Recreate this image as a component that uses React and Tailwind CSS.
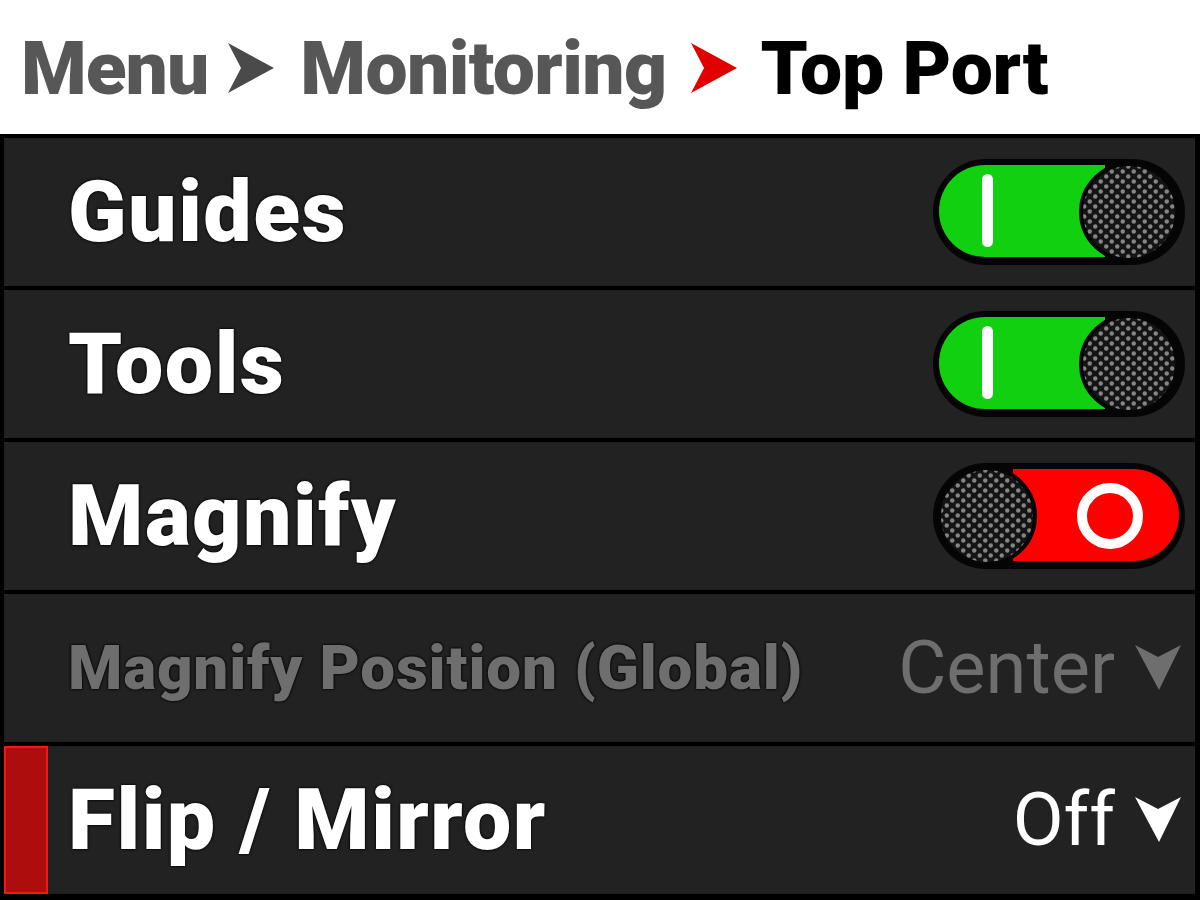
import React from 'react';

const font = { fontFamily: 'Roboto, "Liberation Sans", sans-serif' };

const Chevron = ({ color }) => (
  <svg width="46" height="50" viewBox="0 0 46 50" className="shrink-0">
    <path d="M0 0 L46 25 L0 50 L13 25 Z" fill={color} />
  </svg>
);

const DownArrow = ({ color }) => (
  <svg width="46" height="46" viewBox="0 0 46 46" className="shrink-0">
    <path d="M0 0 L23 12 L46 0 L24 45 Z" fill={color} />
  </svg>
);

const Dots = ({ id }) => (
  <defs>
    <pattern id={id} width="11" height="10" patternUnits="userSpaceOnUse">
      <rect width="11" height="10" fill="#141414" />
      <circle cx="2.75" cy="2.5" r="2.2" fill="#858585" />
      <circle cx="8.25" cy="7.5" r="2.2" fill="#858585" />
    </pattern>
  </defs>
);

const Toggle = ({ on, id }) => (
  <svg width="252" height="106" viewBox="0 0 252 106" className="shrink-0">
    <Dots id={id} />
    <rect x="0" y="0" width="252" height="106" rx="53" fill="#050505" />
    {on ? (
      <>
        <path d="M52 6 H172 V98 H52 A46 46 0 0 1 52 6 Z" fill="#10d010" />
        <rect x="49" y="15" width="11" height="73" rx="5.5" fill="#fff" />
        <circle cx="196" cy="53" r="48" fill={`url(#${id})`} stroke="#050505" strokeWidth="4" />
      </>
    ) : (
      <>
        <path d="M80 6 H200 A46 46 0 0 1 200 98 H80 Z" fill="#ff0000" />
        <circle cx="177" cy="53" r="28" fill="none" stroke="#fff" strokeWidth="10" />
        <circle cx="54" cy="53" r="48" fill={`url(#${id})`} stroke="#050505" strokeWidth="4" />
      </>
    )}
  </svg>
);

const Row = ({ children, marker }) => (
  <div className="flex h-[148px] bg-[#222222]">
    {marker ? (
      <div className="w-[44px] shrink-0 bg-[#ad0d0d] border-2 border-[#f01818]" />
    ) : (
      <div className="w-[44px] shrink-0" />
    )}
    <div className="flex flex-1 items-center justify-between pl-[20px] pr-[10px]">{children}</div>
  </div>
);

const Label = ({ children, dim }) => (
  <span
    className={`font-black leading-none ${dim ? 'text-[62px] tracking-[0.8px] text-[#6e6e6e]' : 'text-[86px] tracking-[1.5px] text-white'} [text-shadow:0_0_3px_#000,0_0_2px_#000]`}
  >
    {children}
  </span>
);

export default function App() {
  return (
    <div className="w-[1200px] h-[900px] overflow-hidden bg-black" style={font}>
      <div className="h-[134px] bg-white flex items-center pl-[21px] pt-[2px]">
        <span className="text-[75px] font-black leading-none text-[#575757] tracking-[-1px]">Menu</span>
        <div className="ml-[20px] mr-[26px]"><Chevron color="#4a4a4a" /></div>
        <span className="text-[75px] font-black leading-none text-[#575757] tracking-[-0.6px]">Monitoring</span>
        <div className="ml-[24px] mr-[24px]"><Chevron color="#e00000" /></div>
        <span className="text-[75px] font-black leading-none text-black tracking-[-0.2px]">Top Port</span>
      </div>
      <div className="flex flex-col gap-[4px] pt-[4px] pl-[4px] pr-[5px]">
        <Row>
          <Label>Guides</Label>
          <Toggle on id="d1" />
        </Row>
        <Row>
          <Label>Tools</Label>
          <Toggle on id="d2" />
        </Row>
        <Row>
          <Label>Magnify</Label>
          <Toggle id="d3" />
        </Row>
        <Row>
          <Label dim>Magnify Position (Global)</Label>
          <div className="flex items-center gap-[20px] pr-[4px]">
            <span className="text-[74px] leading-none text-[#6e6e6e]">Center</span>
            <DownArrow color="#6e6e6e" />
          </div>
        </Row>
        <Row marker>
          <Label>Flip / Mirror</Label>
          <div className="flex items-center gap-[20px] pr-[4px]">
            <span className="text-[74px] leading-none text-white">Off</span>
            <DownArrow color="#ffffff" />
          </div>
        </Row>
      </div>
    </div>
  );
}
